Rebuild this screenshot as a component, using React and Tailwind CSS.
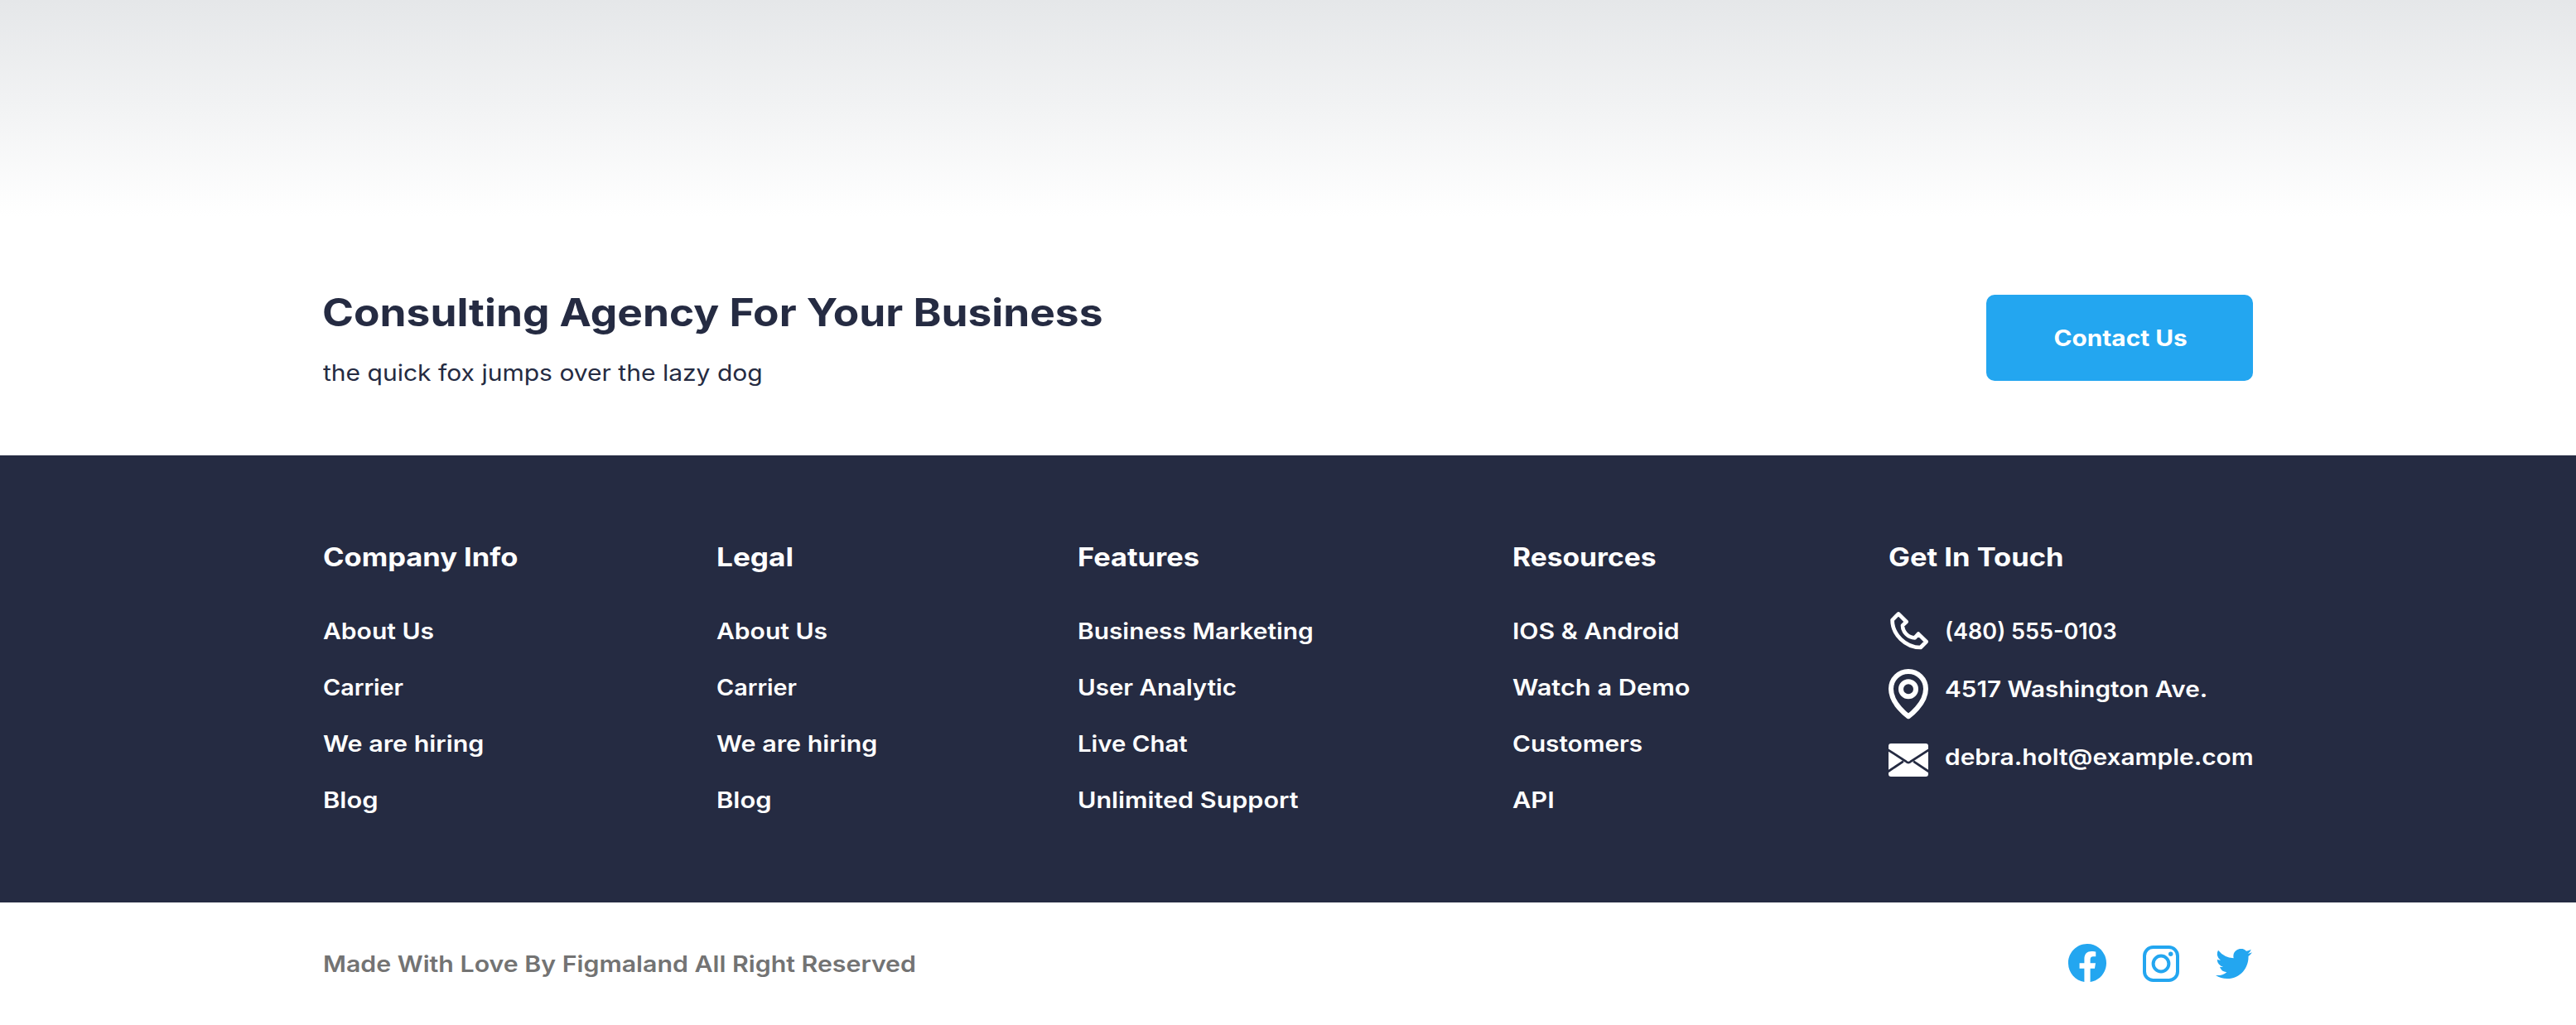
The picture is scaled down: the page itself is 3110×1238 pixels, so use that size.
const COLUMNS = [
  {
    title: ["Company Info", "scale-x-[1.113]"],
    links: [
      ["About Us", "scale-x-[1.113]"],
      ["Carrier", "scale-x-[1.065]"],
      ["We are hiring", "scale-x-[1.127]"],
      ["Blog", "scale-x-[1.142]"],
    ],
  },
  {
    title: ["Legal", "scale-x-[1.134]"],
    links: [
      ["About Us", "scale-x-[1.113]"],
      ["Carrier", "scale-x-[1.065]"],
      ["We are hiring", "scale-x-[1.127]"],
      ["Blog", "scale-x-[1.142]"],
    ],
  },
  {
    title: ["Features", "scale-x-[1.11]"],
    links: [
      ["Business Marketing", "scale-x-[1.106]"],
      ["User Analytic", "scale-x-[1.092]"],
      ["Live Chat", "scale-x-[1.088]"],
      ["Unlimited Support", "scale-x-[1.13]"],
    ],
  },
  {
    title: ["Resources", "scale-x-[1.084]"],
    links: [
      ["IOS & Android", "scale-x-[1.115]"],
      ["Watch a Demo", "scale-x-[1.139]"],
      ["Customers", "scale-x-[1.1]"],
      ["API", "scale-x-[1.138]"],
    ],
  },
];

function PhoneIcon() {
  return (
    <svg className="h-[48px] w-[48px] shrink-0" viewBox="0 -1 48 48" fill="none" stroke="currentColor" strokeWidth="4.7" strokeLinejoin="round">
      <path d="M12 2.4L21.6 12L17 16.4C17 24.5 24 31.3 31.7 31.3L36 26.6L45.6 36L38.7 43C20 43 4.6 27 4.6 9.8Z" />
    </svg>
  );
}

function PinIcon() {
  return (
    <svg className="h-[61px] w-[48px] shrink-0" viewBox="0 0 48 61" fill="none" stroke="currentColor" strokeWidth="6" strokeLinejoin="round">
      <path d="M24 57.3C24 57.3 45 42.5 45 24A21 21 0 0 0 3 24C3 42.5 24 57.3 24 57.3Z" />
      <circle cx="24" cy="24.3" r="9" />
    </svg>
  );
}

function MailIcon() {
  return (
    <svg className="h-[40px] w-[48px] shrink-0" viewBox="0 0 48 40" fill="none">
      <rect width="48" height="40" rx="3" fill="currentColor" />
      <path d="M-1 7.4L20.5 21.2Q24 25.2 27.5 21.2L49 7.4M-1 34.2L17.8 21.6M49 34.2L30.2 21.6" stroke="#252b42" strokeWidth="2.8" />
    </svg>
  );
}

function FacebookIcon() {
  return (
    <svg className="mb-[2px] h-[46px] w-[46px]" viewBox="0 0 16 16" fill="currentColor">
      <path d="M16 8.049c0-4.446-3.582-8.05-8-8.05C3.58 0-.002 3.603-.002 8.05c0 4.017 2.926 7.347 6.75 7.951v-5.625h-2.03V8.05H6.75V6.275c0-2.017 1.195-3.131 3.022-3.131.876 0 1.791.157 1.791.157v1.98h-1.009c-.993 0-1.303.621-1.303 1.258v1.51h2.218l-.354 2.326H9.25V16c3.824-.604 6.75-3.934 6.75-7.951z" />
    </svg>
  );
}

function InstagramIcon() {
  return (
    <svg className="h-[44px] w-[44px]" viewBox="0 0 44 44" fill="none" stroke="currentColor" strokeWidth="4">
      <rect x="2" y="2" width="40" height="40" rx="10.5" />
      <circle cx="22" cy="22" r="9.4" />
      <circle cx="33.7" cy="10.3" r="2.7" fill="currentColor" stroke="none" />
    </svg>
  );
}

function TwitterIcon() {
  return (
    <svg className="h-[36px] w-[44px]" viewBox="0 2 16 13" preserveAspectRatio="none" fill="currentColor">
      <path d="M5.026 15c6.038 0 9.341-5.003 9.341-9.334 0-.14 0-.282-.006-.422A6.685 6.685 0 0 0 16 3.542a6.658 6.658 0 0 1-1.889.518 3.301 3.301 0 0 0 1.447-1.817 6.533 6.533 0 0 1-2.087.793A3.286 3.286 0 0 0 7.875 6.03a9.325 9.325 0 0 1-6.767-3.429 3.289 3.289 0 0 0 1.018 4.382A3.323 3.323 0 0 1 .64 6.575v.045a3.288 3.288 0 0 0 2.632 3.218 3.203 3.203 0 0 1-.865.115 3.23 3.23 0 0 1-.614-.057 3.283 3.283 0 0 0 3.067 2.277A6.588 6.588 0 0 1 .78 13.58a6.32 6.32 0 0 1-.78-.045A9.344 9.344 0 0 0 5.026 15z" />
    </svg>
  );
}

function Heading({ text: [label, stretch] }) {
  return <h3 className={`w-fit origin-left text-[31px] leading-[40px] font-bold ${stretch}`}>{label}</h3>;
}

export default function App() {
  return (
    <div className="flex h-[1238px] w-full flex-col bg-white whitespace-nowrap text-[#252b42] [font-family:Inter,'Open_Sans',sans-serif]">
      <div className="h-[262px] bg-linear-to-b/srgb from-[#e5e7e9] to-white" />

      <section className="flex h-[288px] items-start justify-between px-[390px]">
        <div className="pt-[87px]">
          <h2 className="-ml-px w-fit origin-left scale-x-[1.118] text-[46px] leading-[56px] font-bold">
            Consulting Agency For Your Business
          </h2>
          <p className="mt-[26px] w-fit origin-left scale-x-[1.112] text-[27px] leading-[40px]">the quick fox jumps over the lazy dog</p>
        </div>
        <button className="mt-[94px] h-[104px] w-[322px] rounded-[10px] bg-[#23a6f0] pt-[2px] pl-[2px] text-[27px] font-bold text-white">
          <span className="inline-block scale-x-[1.103]">Contact Us</span>
        </button>
      </section>

      <footer className="grid h-[540px] grid-cols-[475px_436px_525px_454px_440px] bg-[#252b42] px-[390px] pt-[103px] text-white">
        {COLUMNS.map((column, i) => (
          <div key={i}>
            <Heading text={column.title} />
            <ul className="mt-[36px]">
              {column.links.map(([label, stretch]) => (
                <li key={label} className={`w-fit origin-left text-[27px] leading-[68px] font-semibold ${stretch}`}>
                  {label}
                </li>
              ))}
            </ul>
          </div>
        ))}
        <div>
          <Heading text={["Get In Touch", "scale-x-[1.114]"]} />
          <div className="mt-[45px] text-[27px] font-semibold">
            <div className="flex gap-5">
              <PhoneIcon />
              <span className="leading-[50px]">(480) 555-0103</span>
            </div>
            <div className="mt-[20px] flex gap-5">
              <PinIcon />
              <span className="origin-left scale-x-[1.098] leading-[50px]">4517 Washington Ave.</span>
            </div>
            <div className="mt-[29px] flex gap-5">
              <MailIcon />
              <span className="origin-left scale-x-[1.107] leading-[34px]">debra.holt@example.com</span>
            </div>
          </div>
        </div>
      </footer>

      <div className="flex h-[148px] items-center justify-between pr-[391px] pl-[390px]">
        <p className="mt-[2px] origin-left scale-x-[1.122] text-[27px] leading-[40px] font-semibold text-[#737373]">
          Made With Love By Figmaland All Right Reserved
        </p>
        <div className="flex items-center gap-[44px] text-[#23a6f0]">
          <FacebookIcon />
          <InstagramIcon />
          <TwitterIcon />
        </div>
      </div>
    </div>
  );
}
